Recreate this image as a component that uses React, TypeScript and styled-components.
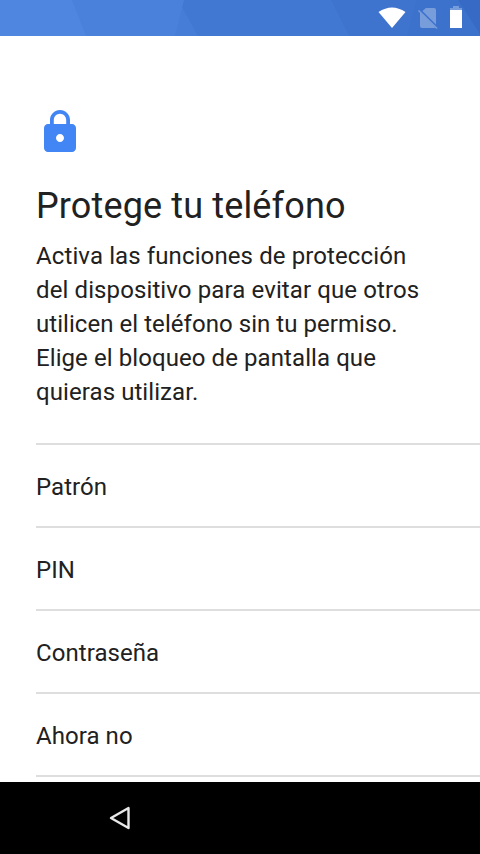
import React from "react";
import styled, { createGlobalStyle } from "styled-components";

const GlobalStyle = createGlobalStyle`
  * { box-sizing: border-box; }
  body { margin: 0; background: #fff; font-family: Roboto, sans-serif; color: #212121; }
`;

const Screen = styled.div`
  width: 480px;
  height: 854px;
  display: flex;
  flex-direction: column;
  overflow: hidden;
  background: #fff;
`;

const StatusBar = styled.header`
  height: 36px;
  flex: none;
  display: grid;
  background: #4178d2;
`;

const Content = styled.main`
  flex: 1;
  min-height: 0;
  overflow: hidden;
  padding: 72px 0 0 36px;
`;

const LockIcon = styled.svg`
  display: block;
  width: 48px;
  height: 48px;
`;

const Title = styled.h1`
  margin: 29px 0 0;
  font-size: 36px;
  line-height: 42px;
  font-weight: 400;
  letter-spacing: 0.14px;
`;

const Description = styled.p`
  margin: 12px 0 0;
  font-size: 24px;
  line-height: 34px;
`;

const Line = styled.span<{ $spacing: number }>`
  display: block;
  letter-spacing: ${({ $spacing }) => $spacing}px;
`;

const Options = styled.ul`
  list-style: none;
  margin: 34px 0 0;
  padding: 0;
  border-top: 2px solid #dedede;
`;

const Option = styled.li`
  height: 83px;
  padding-top: 2px;
  display: flex;
  align-items: center;
  border-bottom: 2px solid #dedede;
  font-size: 24px;
  letter-spacing: 0.06px;
`;

const NavBar = styled.nav`
  height: 72px;
  flex: none;
  padding-left: 96px;
  display: flex;
  align-items: center;
  background: #000;
`;

const lines = [
  { text: "Activa las funciones de protección", spacing: 0.11 },
  { text: "del dispositivo para evitar que otros", spacing: 0.11 },
  { text: "utilicen el teléfono sin tu permiso.", spacing: 0.05 },
  { text: "Elige el bloqueo de pantalla que", spacing: 0.08 },
  { text: "quieras utilizar.", spacing: 0.08 },
];
const options = ["Patrón", "PIN", "Contraseña", "Ahora no"];

export default function App() {
  return (
    <Screen>
      <GlobalStyle />
      <StatusBar>
        <svg width="480" height="36" viewBox="0 0 480 36">
          <path d="M331 0H480V36H349Z" fill="#3e73ce" />
          <path d="M417 0H480V36H407Z" fill="#3c71cc" />
          <path d="M458 0H480V34Z" fill="#366ac5" />
          <path d="M0 0H184L182 7L198 36H0Z" fill="#467dd7" />
          <path d="M0 0H184L175 36H0Z" fill="#4a81db" />
          <path d="M0 0H72L86 36H0Z" fill="#4f86df" />
          <path d="M378.500 12Q392 2.800 405.500 12L392 28Z" fill="#fff" />
          <path d="M426 8h8q2 0 2 2v16q0 2-2 2h-12q-2 0-2-2V13Z" fill="#789ddb" />
          <path d="M419.500 9.500l18 18" stroke="#3d72cd" strokeWidth="2" />
          <path d="M418.500 10.500l18.500 18" stroke="#789ddb" strokeWidth="1.600" />
          <path d="M450 10V8h3V6h6v2h3v2Z" fill="#fff" opacity=".3" />
          <path d="M450 10h12v18h-12Z" fill="#fff" />
        </svg>
      </StatusBar>
      <Content>
        <LockIcon viewBox="0 0 24 24">
          <path fill="#4285f4" d="M18 8h-1V6c0-2.760-2.240-5-5-5S7 3.240 7 6v2H6c-1.100 0-2 .9-2 2v10c0 1.100.9 2 2 2h12c1.100 0 2-.9 2-2V10c0-1.100-.9-2-2-2zm-6 9c-1.100 0-2-.9-2-2s.9-2 2-2 2 .9 2 2-.9 2-2 2zm3.100-9H8.900V6c0-1.710 1.390-3.100 3.100-3.100s3.100 1.390 3.100 3.100v2z" />
        </LockIcon>
        <Title>Protege tu teléfono</Title>
        <Description>
          {lines.map(({ text, spacing }) => (
            <Line key={text} $spacing={spacing}>{text}</Line>
          ))}
        </Description>
        <Options>
          {options.map((option) => <Option key={option}>{option}</Option>)}
        </Options>
      </Content>
      <NavBar>
        <svg width="48" height="48" viewBox="0 0 48 48">
          <path d="M15 24L32.500 14V34Z" fill="none" stroke="#e8e8e8" strokeWidth="2.400" strokeLinejoin="round" />
        </svg>
      </NavBar>
    </Screen>
  );
}
